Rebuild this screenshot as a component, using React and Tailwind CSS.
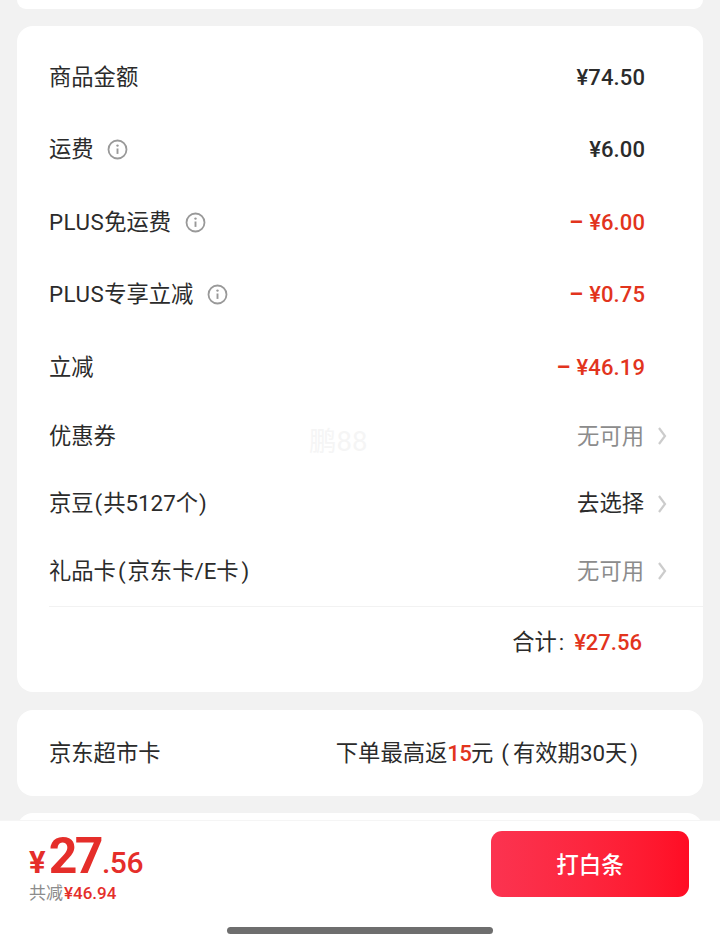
const cjk = "font-['Roboto','Noto_Sans_CJK_SC',sans-serif]";

const InfoIcon = () => (
  <svg width="21" height="21" viewBox="0 0 21 21" fill="none" className="shrink-0">
    <circle cx="10.5" cy="10.5" r="9" stroke="#999" strokeWidth="1.8" />
    <circle cx="10.5" cy="6.6" r="1.2" fill="#999" />
    <path d="M10.5 9.5v5.4" stroke="#999" strokeWidth="1.9" />
  </svg>
);

const Chevron = () => (
  <svg width="9" height="18" viewBox="0 0 9 18" fill="none" className="shrink-0">
    <path d="M1 1 7 9 1 17" stroke="#cccccc" strokeWidth="2.2" />
  </svg>
);

const AmountRow = ({ label, info, gap, amount, red }) => (
  <div className="flex h-[72.5px] items-center justify-between pr-[58px]">
    <div className="flex items-center">
      <span className="text-[22.3px] text-[#2b2b2b]">{label}</span>
      {info && <span className={gap}><InfoIcon /></span>}
    </div>
    <span className={`text-[22px] font-medium tracking-[0.1px] ${red ? "text-[#e2341d]" : "text-[#2b2b2b]"}`}>
      {red && <span className="mr-[6px] font-bold">–</span>}
      {amount}
    </span>
  </div>
);

const PickRow = ({ label, value, muted }) => (
  <div className="flex h-[67.5px] items-center justify-between pb-[2px] pr-[36px]">
    <span className="text-[22.3px] text-[#2b2b2b]">{label}</span>
    <div className="flex items-center gap-[14px]">
      <span className={`text-[22.3px] ${muted ? "text-[#8c8c8c]" : "text-[#2b2b2b]"}`}>{value}</span>
      <Chevron />
    </div>
  </div>
);

const Plus = () => <span className="tracking-[0.5px]">PLUS</span>;

const App = () => {
  return (
    <div className={`relative flex h-[946px] w-[720px] flex-col overflow-hidden bg-[#f2f2f2] px-[17px] ${cjk}`}>
      <div className="h-[9px] shrink-0 rounded-b-2xl bg-white" />

      <div className="relative mt-[17px] h-[666px] shrink-0 rounded-2xl bg-white pt-[15px]">
        <div className="pl-[32px]">
          <AmountRow label="商品金额" amount="¥74.50" />
          <AmountRow label="运费" info gap="ml-[13px]" amount="¥6.00" />
          <AmountRow label={<><Plus />免运费</>} info gap="ml-[14px]" amount="¥6.00" red />
          <AmountRow label={<><Plus />专享立减</>} info gap="ml-[14px]" amount="¥0.75" red />
          <AmountRow label="立减" amount="¥46.19" red />
          <PickRow label="优惠券" value="无可用" muted />
          <PickRow
            label={<>京豆<span className="mx-[1px]">(</span>共5127个<span className="mx-[1px]">)</span></>}
            value="去选择"
          />
          <PickRow
            label={<>礼品卡<span className="mx-[2px]">(</span>京东卡/E卡<span className="ml-[3px]">)</span></>}
            value="无可用"
            muted
          />
          <div className="flex h-[72px] items-center justify-end border-t border-[#f2f2f2] pr-[61px]">
            <span className="text-[22.3px] text-[#2b2b2b]">合计<span className="ml-[2px]">:</span></span>
            <span className="ml-[10px] text-[22px] font-medium text-[#e2341d]">¥27.56</span>
          </div>
        </div>
        <span className="absolute left-[292px] top-[395px] text-[27.5px] text-[#f5f5f5]">鹏88</span>
      </div>

      <div className="mt-[18px] flex h-[86px] shrink-0 items-center justify-between rounded-2xl bg-white pl-[32px] pr-[65px] pt-[2px]">
        <span className="text-[22.3px] text-[#2b2b2b]">京东超市卡</span>
        <span className="text-[22.3px] text-[#2b2b2b]">
          下单最高返
          <span className="font-medium tracking-[-0.8px] text-[#e2341d]">15</span>
          元<span className="ml-[8px] mr-[4px]">(</span>有效期30天<span className="ml-[3px]">)</span>
        </span>
      </div>

      <div className="mt-[17px] h-[40px] shrink-0 rounded-t-2xl bg-white" />

      <div className="absolute inset-x-0 bottom-0 h-[126px] border-t border-[#f5f5f5] bg-white">
        <div className="flex items-start justify-between pl-[29px] pr-[31px] pt-[10px]">
          <div>
            <div className="flex h-[50px] items-baseline font-bold leading-none text-[#e52e2a]">
              <span className="mr-[3px] text-[31px]">¥</span>
              <span className="text-[50px] tracking-[-2.5px]">27</span>
              <span className="ml-[1px] text-[30px] font-medium tracking-[-0.5px]">.56</span>
            </div>
            <div className="mt-[1px] flex items-center text-[17px] leading-[22px]">
              <span className="text-[#8c8c8c]">共减</span>
              <span className="ml-[1px] font-medium text-[#e52e2a]">¥46.94</span>
            </div>
          </div>
          <button className="flex h-[66px] w-[198px] items-center justify-center rounded-[11px] bg-gradient-to-r from-[#fb3350] to-[#ff0c24] pt-[4px] text-[22.5px] font-medium text-white">
            打白条
          </button>
        </div>
        <div className="absolute bottom-[12px] left-[227px] h-[7px] w-[266px] rounded-full bg-[#6e6e6e]" />
      </div>
    </div>
  );
};

export default App;
